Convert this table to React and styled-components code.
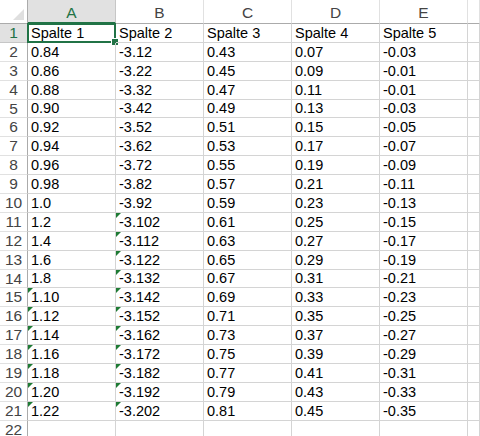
import React from 'react';
import styled, { createGlobalStyle } from 'styled-components';

const GlobalStyle = createGlobalStyle`
  html, body {
    margin: 0;
    padding: 0;
    background: #ffffff;
    overflow: hidden;
  }
`;

const columns = ['A', 'B', 'C', 'D', 'E'];

const colA = ['0.84', '0.86', '0.88', '0.90', '0.92', '0.94', '0.96', '0.98', '1.0', '1.2', '1.4', '1.6', '1.8', '1.10', '1.12', '1.14', '1.16', '1.18', '1.20', '1.22'];
const colB = ['-3.12', '-3.22', '-3.32', '-3.42', '-3.52', '-3.62', '-3.72', '-3.82', '-3.92', '-3.102', '-3.112', '-3.122', '-3.132', '-3.142', '-3.152', '-3.162', '-3.172', '-3.182', '-3.192', '-3.202'];
const colC = Array.from({ length: 20 }, (_, i) => (0.43 + i * 0.02).toFixed(2));
const colD = Array.from({ length: 20 }, (_, i) => (0.07 + i * 0.02).toFixed(2));
const colE = ['-0.03', '-0.01', '-0.01', ...Array.from({ length: 17 }, (_, i) => (-(0.03 + i * 0.02)).toFixed(2))];

// rows of the sheet, "text" marks numbers stored as text (green corner)
const rows = [
  [{ v: 'Spalte 1' }, { v: 'Spalte 2' }, { v: 'Spalte 3' }, { v: 'Spalte 4' }, { v: 'Spalte 5' }],
  ...colA.map((a, i) => [
    { v: a, text: i >= 13 },
    { v: colB[i], text: i >= 9 },
    { v: colC[i] },
    { v: colD[i] },
    { v: colE[i] },
  ]),
  [{ v: '' }, { v: '' }, { v: '' }, { v: '' }, { v: '' }],
];

const Sheet = styled.div`
  display: grid;
  grid-template-columns: 28px repeat(5, 88px) 1fr;
  grid-template-rows: 24px;
  grid-auto-rows: 18.9px;
  width: 480px;
  height: 436px;
  overflow: hidden;
  font-family: 'Liberation Sans', Arial, sans-serif;
  font-size: 14.5px;
  color: #000;
`;

const Corner = styled.div`
  position: relative;
  background: #ffffff;
  border-right: 1px solid #ababab;
  border-bottom: 1px solid #ababab;
  box-sizing: border-box;

  &::after {
    content: '';
    position: absolute;
    right: 3px;
    bottom: 3px;
    border-style: solid;
    border-width: 0 0 11px 11px;
    border-color: transparent transparent #dfdfdf transparent;
  }
`;

const ColHead = styled.div`
  box-sizing: border-box;
  display: flex;
  align-items: center;
  justify-content: center;
  padding-top: 3px;
  font-size: 15.5px;
  color: ${(p) => (p.$active ? '#217346' : '#444444')};
  background: ${(p) => (p.$active ? '#e1e1e1' : '#ffffff')};
  border-right: 1px solid ${(p) => (p.$active ? '#c6c6c6' : '#e1e1e1')};
  border-bottom: ${(p) => (p.$active ? '2px solid #217346' : '1px solid #ababab')};
`;

const RowHead = styled.div`
  box-sizing: border-box;
  display: flex;
  align-items: center;
  justify-content: center;
  font-size: 15.5px;
  color: ${(p) => (p.$active ? '#217346' : '#444444')};
  background: ${(p) => (p.$active ? '#e1e1e1' : '#ffffff')};
  border-right: 1px solid #ababab;
  border-bottom: 1px solid ${(p) => (p.$active ? '#c6c6c6' : '#e1e1e1')};
`;

const Cell = styled.div`
  position: relative;
  box-sizing: border-box;
  display: flex;
  align-items: flex-end;
  padding: 0 0 1px 3px;
  white-space: nowrap;
  border-right: 1px solid #d4d4d4;
  border-bottom: 1px solid #d4d4d4;
`;

const TextMark = styled.span`
  position: absolute;
  left: 0;
  top: 0;
  border-style: solid;
  border-width: 5px 5px 0 0;
  border-color: #1e7b34 transparent transparent transparent;
`;

const Selection = styled.span`
  position: absolute;
  left: -1px;
  top: -1px;
  right: -1px;
  bottom: -1px;
  border: 2px solid #217346;
  pointer-events: none;

  &::after {
    content: '';
    position: absolute;
    right: -5px;
    bottom: -5px;
    width: 6px;
    height: 6px;
    background: #217346;
    border: 1px solid #ffffff;
  }
`;

export default function App() {
  return (
    <>
      <GlobalStyle />
      <Sheet>
        <Corner />
        {columns.map((c, i) => (
          <ColHead key={c} $active={i === 0}>{c}</ColHead>
        ))}
        <ColHead />
        {rows.map((row, r) => (
          <React.Fragment key={r}>
            <RowHead $active={r === 0}>{r + 1}</RowHead>
            {row.map((cell, c) => (
              <Cell key={c}>
                {cell.text && <TextMark />}
                {r === 0 && c === 0 && <Selection />}
                {cell.v}
              </Cell>
            ))}
            <Cell />
          </React.Fragment>
        ))}
      </Sheet>
    </>
  );
}
